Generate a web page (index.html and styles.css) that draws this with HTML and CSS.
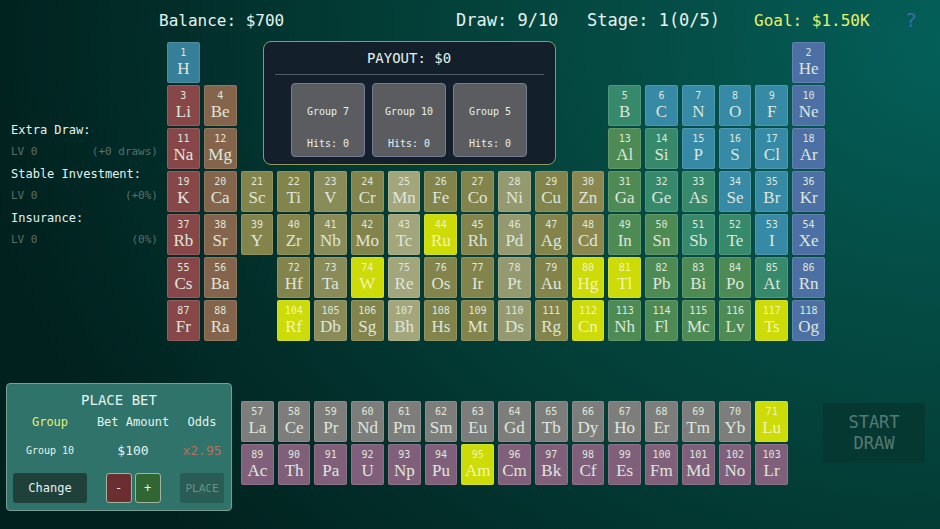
FILE: index.html
```html
<!DOCTYPE html>
<html lang="en">
<head>
  <meta charset="UTF-8">
  <title>Periodic Draw</title>
  <meta name="viewport" content="width=device-width, initial-scale=1">
  <link rel="stylesheet" href="styles.css">
</head>
<body>

  <header class="topbar">
    <span>Balance: $700</span>
    <span class="wide">Draw: 9/10</span>
    <span class="wide">Stage: 1(0/5)</span>
    <span class="goal">Goal: $1.50K</span>
    <button class="help" type="button">?</button>
  </header>

  <main class="board">
    <aside class="upgrades">
      <h2>Extra Draw:</h2>
      <p><span>LV 0</span><span>(+0 draws)</span></p>
      <h2>Stable Investment:</h2>
      <p><span>LV 0</span><span>(+0%)</span></p>
      <h2>Insurance:</h2>
      <p><span>LV 0</span><span>(0%)</span></p>
    </aside>

    <div class="table" id="mainTable">
      <section class="payout">
        <h2>PAYOUT: $0</h2>
        <div class="bets">
          <div class="bet"><span>Group 7</span><span>Hits: 0</span></div>
          <div class="bet"><span>Group 10</span><span>Hits: 0</span></div>
          <div class="bet"><span>Group 5</span><span>Hits: 0</span></div>
        </div>
      </section>
    </div>
  </main>

  <div class="bottom">
    <section class="place-bet">
      <h2>PLACE BET</h2>
      <div class="bet-grid">
        <span class="head active">Group</span>
        <span class="head">Bet Amount</span>
        <span class="head">Odds</span>
        <span class="value group">Group 10</span>
        <span class="value">$100</span>
        <span class="value odds">x2.95</span>
        <button class="change" type="button">Change</button>
        <div class="steps">
          <button class="minus" type="button">-</button>
          <button class="plus" type="button">+</button>
        </div>
        <button class="place" type="button" disabled>PLACE</button>
      </div>
    </section>

    <div class="table fblock" id="fBlock"></div>

    <button class="start" type="button" disabled>START DRAW</button>
  </div>

  <script src="script.js"></script>
</body>
</html>
```
FILE: styles.css
```css
* { box-sizing: border-box; }

body {
  margin: 0;
  min-height: 100vh;
  font-family: "DejaVu Sans Mono", monospace;
  color: #e4f3ee;
  background: radial-gradient(ellipse 105% 150% at 102% 8%, #04605a 0%, #044a43 35%, #033f38 55%, #022d29 80%, #01211e 100%);
}

h2, p { margin: 0; font-weight: normal; }

button {
  font-family: inherit;
  color: inherit;
  padding: 0;
  border: none;
  border-radius: 3px;
  cursor: pointer;
}

/* top bar */
.topbar {
  display: grid;
  grid-template-columns: 297fr 131fr 167fr 151fr 35fr;
  align-items: center;
  height: 42px;
  padding: 0 0 2px 159px;
  font-size: 16px;
  white-space: nowrap;
}

.wide { font-size: 17px; }
.goal { color: #e6f26a; }

.help {
  justify-self: start;
  background: none;
  color: #3a6cb4;
  font-size: 20px;
}

/* board */
.board {
  display: grid;
  grid-template-columns: 167px 1fr;
  padding-right: 115px;
}

.upgrades {
  padding: 77px 9px 0 11px;
}

.upgrades h2 {
  font-size: 12px;
  line-height: 22px;
  white-space: nowrap;
}

.upgrades p {
  display: flex;
  justify-content: space-between;
  font-size: 11px;
  line-height: 22px;
  color: #5c6f6a;
}

.table {
  display: grid;
  grid-template-columns: repeat(18, 1fr);
  grid-auto-rows: 41px;
  gap: 2px 4px;
}

.tile {
  display: flex;
  flex-direction: column;
  align-items: center;
  min-width: 0;
  padding-top: 4px;
  border: 1px solid rgba(255, 255, 255, 0.12);
  border-radius: 2px;
  color: #dfe6dc;
}

.tile span {
  font-size: 10px;
  line-height: 12px;
}

.tile b {
  font-family: "Liberation Serif", serif;
  font-size: 17px;
  font-weight: normal;
  line-height: 19px;
}

.alkali { background: #874748; }
.earth { background: #84644a; }
.metal { background: #82844b; }
.metal-light { background: #898b58; }
.metal-pale { background: #a3a57b; }
.metal-gray { background: #949970; }
.zinc { background: #8a8850; }
.post { background: #4e8a54; }
.metalloid { background: #37896b; }
.nonmetal { background: #368aa5; }
.hydrogen { background: #357f99; }
.noble { background: #4d70a4; }
.lanth { background: #7d7e7b; }
.actin { background: #805f7a; }
.hit { background: #cddb08; color: #f4f5ac; }

/* payout panel over the empty part of the table */
.payout {
  grid-area: 1 / 3 / 4 / 12;
  align-self: start;
  width: 293px;
  height: 124px;
  margin: -1px 0 0 22px;
  padding: 0 11px;
  border: 1px solid #8e9a60;
  border-radius: 8px;
  background: #13202b;
}

.payout h2 {
  font-size: 14px;
  line-height: 32px;
  text-align: center;
  border-bottom: 1px solid #4d5c66;
}

.bets {
  display: flex;
  justify-content: center;
  gap: 7px;
  padding-top: 8px;
}

.bet {
  display: flex;
  flex-direction: column;
  align-items: center;
  justify-content: space-between;
  width: 74px;
  height: 74px;
  padding: 22px 0 6px;
  border: 1px solid #777b93;
  border-radius: 4px;
  background: #5b5c60;
  font-size: 10px;
  line-height: 12px;
}

/* bottom row */
.bottom {
  display: flex;
  align-items: flex-start;
  margin-top: 42px;
  padding: 0 15px 0 6px;
}

.place-bet {
  width: 226px;
  height: 128px;
  padding: 5px 2px 0;
  border: 1px solid #7d9c92;
  border-radius: 4px;
  background: #30736a;
}

.place-bet h2 {
  font-size: 14px;
  line-height: 22px;
  text-align: center;
}

.bet-grid {
  display: grid;
  grid-template-columns: 82fr 84fr 54fr;
  grid-template-rows: 22px 34px 36px;
  place-items: center;
  white-space: nowrap;
}

.head { font-size: 12px; }
.active { color: #e6f26a; }
.value { font-size: 13px; }
.group { font-size: 10px; }
.odds { color: #b8705f; }

.change, .place, .steps {
  align-self: end;
}

.change, .place {
  height: 30px;
  font-size: 12px;
}

.change {
  width: 74px;
  background: #20403a;
}

.place {
  width: 44px;
  background: #2a5c56;
  color: #6c8f88;
  font-size: 11px;
}

.steps {
  display: flex;
  gap: 3px;
}

.steps button {
  width: 26px;
  height: 30px;
  border: 1px solid #a3b39f;
  font-size: 12px;
}

.minus { background: #6c2f31; }
.plus { background: #2f6631; }

.fblock {
  flex: 1;
  grid-template-columns: repeat(15, 1fr);
  margin: 18px 35px 0 9px;
}

.start {
  width: 102px;
  height: 60px;
  margin-top: 20px;
  padding: 0 20px;
  background: #063832;
  color: #557a72;
  font-size: 17px;
  line-height: 21px;
}
```
FILE: script.js
```js
const hits = [44, 71, 74, 80, 81, 95, 104, 112, 117];

// type, then "number symbol row column"
const mainElements = {
  hydrogen: ['1 H 1 1'],
  alkali: ['3 Li 2 1', '11 Na 3 1', '19 K 4 1', '37 Rb 5 1', '55 Cs 6 1', '87 Fr 7 1'],
  earth: ['4 Be 2 2', '12 Mg 3 2', '20 Ca 4 2', '38 Sr 5 2', '56 Ba 6 2', '88 Ra 7 2'],
  metal: [
    '21 Sc 4 3', '39 Y 5 3',
    '22 Ti 4 4', '40 Zr 5 4', '72 Hf 6 4', '104 Rf 7 4',
    '24 Cr 4 6', '42 Mo 5 6', '74 W 6 6', '106 Sg 7 6',
    '26 Fe 4 8', '44 Ru 5 8', '76 Os 6 8', '108 Hs 7 8',
    '27 Co 4 9', '45 Rh 5 9', '77 Ir 6 9', '109 Mt 7 9',
    '29 Cu 4 11', '47 Ag 5 11', '79 Au 6 11', '111 Rg 7 11'
  ],
  'metal-light': ['23 V 4 5', '41 Nb 5 5', '73 Ta 6 5', '105 Db 7 5'],
  'metal-pale': ['25 Mn 4 7', '43 Tc 5 7', '75 Re 6 7', '107 Bh 7 7'],
  'metal-gray': ['28 Ni 4 10', '46 Pd 5 10', '78 Pt 6 10', '110 Ds 7 10'],
  zinc: ['30 Zn 4 12', '48 Cd 5 12', '80 Hg 6 12', '112 Cn 7 12'],
  post: [
    '13 Al 3 13', '31 Ga 4 13', '49 In 5 13', '81 Tl 6 13', '113 Nh 7 13',
    '50 Sn 5 14', '82 Pb 6 14', '114 Fl 7 14',
    '83 Bi 6 15', '115 Mc 7 15', '84 Po 6 16', '116 Lv 7 16', '117 Ts 7 17'
  ],
  metalloid: [
    '5 B 2 13', '14 Si 3 14', '32 Ge 4 14', '33 As 4 15',
    '51 Sb 5 15', '52 Te 5 16', '85 At 6 17'
  ],
  nonmetal: [
    '6 C 2 14', '7 N 2 15', '8 O 2 16', '9 F 2 17',
    '15 P 3 15', '16 S 3 16', '17 Cl 3 17',
    '34 Se 4 16', '35 Br 4 17', '53 I 5 17'
  ],
  noble: ['2 He 1 18', '10 Ne 2 18', '18 Ar 3 18', '36 Kr 4 18', '54 Xe 5 18', '86 Rn 6 18', '118 Og 7 18']
};

const lanthanides = 'La Ce Pr Nd Pm Sm Eu Gd Tb Dy Ho Er Tm Yb Lu'.split(' ');
const actinides = 'Ac Th Pa U Np Pu Am Cm Bk Cf Es Fm Md No Lr'.split(' ');

function addTile(parent, type, number, symbol, row, column) {
  const tile = document.createElement('div');
  tile.className = `tile ${type}`;
  if (hits.includes(Number(number))) tile.classList.add('hit');
  tile.style.gridArea = `${row} / ${column}`;
  tile.innerHTML = `<span>${number}</span><b>${symbol}</b>`;
  parent.appendChild(tile);
}

const mainTable = document.getElementById('mainTable');
for (const [type, list] of Object.entries(mainElements)) {
  list.forEach(item => addTile(mainTable, type, ...item.split(' ')));
}

const fBlock = document.getElementById('fBlock');
lanthanides.forEach((symbol, i) => addTile(fBlock, 'lanth', 57 + i, symbol, 1, i + 1));
actinides.forEach((symbol, i) => addTile(fBlock, 'actin', 89 + i, symbol, 2, i + 1));
```
